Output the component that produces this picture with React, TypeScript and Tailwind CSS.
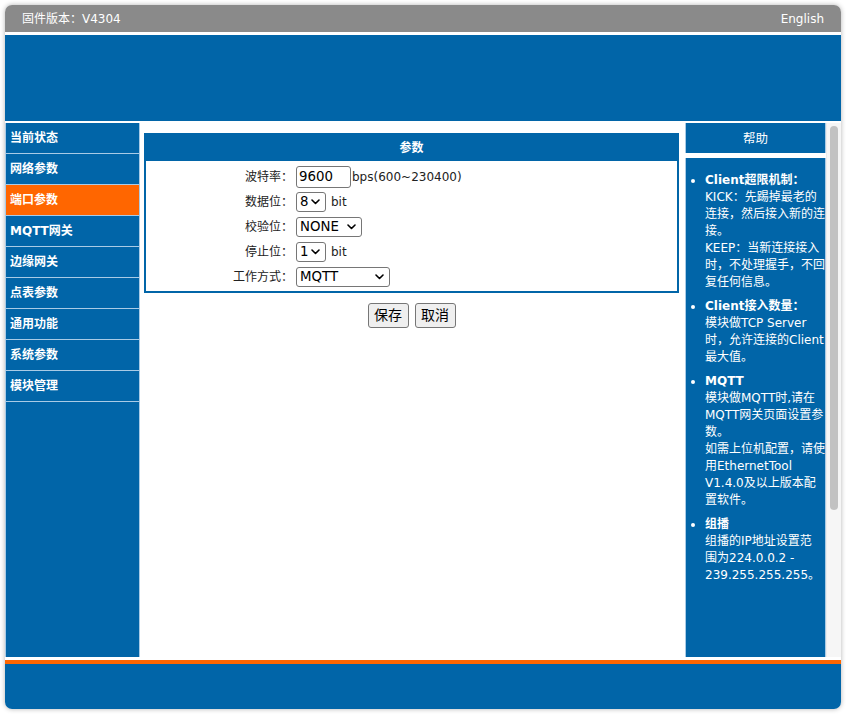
import React from 'react';

const FONT = '"DejaVu Sans", "Noto Sans CJK SC", sans-serif';

const menu = ['当前状态', '网络参数', '端口参数', 'MQTT网关', '边缘网关', '点表参数', '通用功能', '系统参数', '模块管理'];

// help lines are broken the same way the original page wraps them
const help = [
    {
        title: 'Client超限机制：',
        lines: ['KICK：先踢掉最老的', '连接，然后接入新的连', '接。', 'KEEP：当新连接接入', '时，不处理握手，不回', '复任何信息。'],
    },
    {
        title: 'Client接入数量：',
        lines: ['模块做TCP Server', '时，允许连接的Client', '最大值。'],
    },
    {
        title: 'MQTT',
        lines: ['模块做MQTT时,请在', 'MQTT网关页面设置参', '数。', '如需上位机配置，请使', '用EthernetTool', 'V1.4.0及以上版本配', '置软件。'],
    },
    {
        title: '组播',
        lines: ['组播的IP地址设置范', '围为224.0.0.2 -', '239.255.255.255。'],
    },
];

function SideMenu() {
    return (
        <nav className="w-[135px] bg-[#0165a8] border-x border-[#a9cbe6] flex flex-col">
            {menu.map((item) => (
                <div
                    key={item}
                    className={`h-[31px] flex items-center pl-[4px] border-b border-[#a9cbe6] text-[12px] font-bold text-white ${
                        item === '端口参数' ? 'bg-[#ff6600]' : ''
                    }`}
                >
                    {item}
                </div>
            ))}
        </nav>
    );
}

function FormRow({ label, children }: { label: string; children: React.ReactNode }) {
    return (
        <div className="h-[25px] flex items-center">
            <div className="w-[147px] text-right text-[12px] text-[#222]">{label}</div>
            <div className="ml-[3px] flex items-center text-[12px] text-[#222]">{children}</div>
        </div>
    );
}

function Select({ width, value, options }: { width: string; value: string; options: string[] }) {
    return (
        <div className={`relative ${width}`}>
            <select
                defaultValue={value}
                className="appearance-none w-full h-[20px] border border-[#767676] rounded-[3px] bg-white text-[13.33px] leading-[18px] text-black pl-[3px]"
            >
                {options.map((o) => (
                    <option key={o}>{o}</option>
                ))}
            </select>
            <svg
                className="absolute right-[6px] top-[7px] pointer-events-none"
                width="9"
                height="6"
                viewBox="0 0 9 6"
            >
                <path d="M1 1 L4.5 4.5 L8 1" fill="none" stroke="#000" strokeWidth="1.6" strokeLinecap="round" strokeLinejoin="round" />
            </svg>
        </div>
    );
}

function PortParams() {
    return (
        <main className="flex-1 bg-white pt-[10px] pl-[4px] pr-[6px]">
            <div className="border-2 border-[#0165a8]">
                <div className="h-[26px] bg-[#0165a8] flex items-center justify-center text-[12px] font-bold text-white">
                    参数
                </div>
                <div className="pt-[3px] pb-[2px]">
                    <FormRow label="波特率：">
                        <input
                            defaultValue="9600"
                            className="w-[55px] h-[22px] border border-[#767676] rounded-[3px] px-[2px] text-[13.33px] text-black"
                        />
                        <span className="ml-[1px]">bps(600~230400)</span>
                    </FormRow>
                    <FormRow label="数据位：">
                        <Select width="w-[30px]" value="8" options={['5', '6', '7', '8']} />
                        <span className="ml-[5px]">bit</span>
                    </FormRow>
                    <FormRow label="校验位：">
                        <Select width="w-[66px]" value="NONE" options={['NONE', 'ODD', 'EVEN']} />
                    </FormRow>
                    <FormRow label="停止位：">
                        <Select width="w-[30px]" value="1" options={['1', '2']} />
                        <span className="ml-[5px]">bit</span>
                    </FormRow>
                    <FormRow label="工作方式：">
                        <Select width="w-[94px]" value="MQTT" options={['TCP Server', 'TCP Client', 'MQTT']} />
                    </FormRow>
                </div>
            </div>
            <div className="mt-[10px] flex justify-center gap-[6px]">
                <button className="w-[41px] h-[25px] border border-[#767676] rounded-[3px] bg-[#efefef] text-[14px] text-black">
                    保存
                </button>
                <button className="w-[41px] h-[25px] border border-[#767676] rounded-[3px] bg-[#efefef] text-[14px] text-black">
                    取消
                </button>
            </div>
        </main>
    );
}

function HelpPanel() {
    return (
        <aside className="w-[141px] flex flex-col bg-white">
            <div className="h-[30px] bg-[#0165a8] flex items-center justify-center pt-[2px] text-[12.5px] text-white border-x border-[#a9cbe6]">
                帮助
            </div>
            <div className="mt-[5px] flex-1 overflow-hidden bg-[#0165a8] border-x border-[#a9cbe6] text-white text-[12px] leading-[17px]">
                <ul className="list-disc pl-[19px] pt-[14px] whitespace-nowrap">
                    {help.map((h, i) => (
                        <li key={h.title} className={i < help.length - 1 ? 'mb-[7px]' : ''}>
                            <b>{h.title}</b>
                            {h.lines.map((l) => (
                                <React.Fragment key={l}>
                                    <br />
                                    {l}
                                </React.Fragment>
                            ))}
                        </li>
                    ))}
                </ul>
            </div>
        </aside>
    );
}

export default function App() {
    return (
        <div className="w-[846px] h-[714px] bg-white p-[5px]" style={{ fontFamily: FONT }}>
            <div className="h-[704px] flex flex-col rounded-[7px] overflow-hidden shadow-[0_0_5px_rgba(0,0,0,0.3)] bg-white">
                <header className="h-[27px] shrink-0 bg-[#8a8a8a] flex items-center justify-between px-[17px] text-[12px] text-white">
                    <span>固件版本：V4304</span>
                    <span>English</span>
                </header>
                <div className="h-[86px] shrink-0 mt-[3px] bg-[#0165a8]" />
                <div className="h-[534px] shrink-0 mt-[2px] flex">
                    <SideMenu />
                    <PortParams />
                    <HelpPanel />
                    <div className="w-[15px] bg-[#f6f6f6] border-l border-[#ececec] pt-[3px] flex justify-center">
                        <div className="w-[8px] h-[384px] rounded-full bg-[#c2c2c2]" />
                    </div>
                </div>
                <div className="h-[4px] shrink-0 mt-[3px] bg-[#ff6600]" />
                <footer className="flex-1 bg-[#0165a8]" />
            </div>
        </div>
    );
}
